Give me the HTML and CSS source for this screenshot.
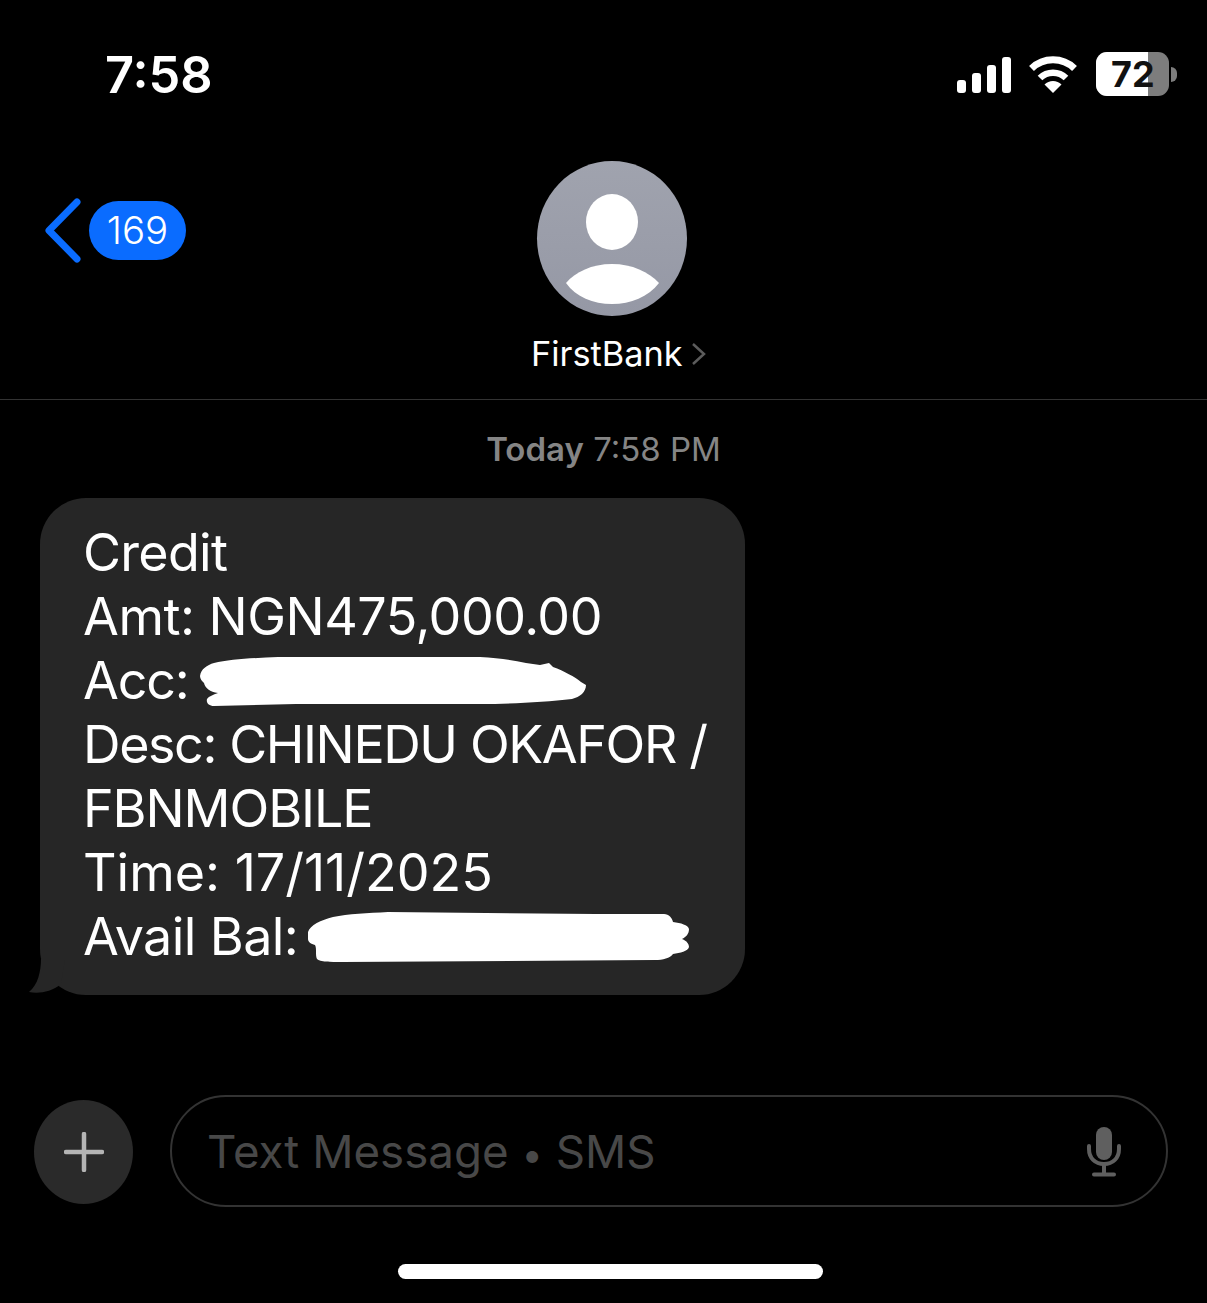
FILE: index.html
```html
<!DOCTYPE html>
<html lang="en">
<head>
    <meta charset="UTF-8">
    <meta name="viewport" content="width=device-width, initial-scale=1.0">
    <title>FirstBank</title>
    <link rel="stylesheet" href="styles.css">
</head>
<body>
    <div class="phone">
        <div class="status-bar">
            <span class="clock">7:58</span>
            <div class="status-icons">
                <div class="signal">
                    <span class="bar bar-1"></span>
                    <span class="bar bar-2"></span>
                    <span class="bar bar-3"></span>
                    <span class="bar bar-4"></span>
                </div>
                <svg class="wifi" width="50" height="39" viewBox="0 0 50 39">
                    <path d="M3.5 14.5A31 31 0 0 1 46.500 14.500" fill="none" stroke="#fff" stroke-width="7"/>
                    <path d="M12 24A18.500 18.500 0 0 1 38 24" fill="none" stroke="#fff" stroke-width="6.500"/>
                    <path d="M25 39L16.500 30.500A12 12 0 0 1 33.500 30.500Z" fill="#fff"/>
                </svg>
                <div class="battery">
                    <div class="battery-body">
                        <div class="battery-level"></div>
                        <span class="battery-text">72</span>
                    </div>
                    <span class="battery-cap"></span>
                </div>
            </div>
        </div>

        <div class="nav">
            <div class="back">
                <svg class="back-arrow" width="36" height="65" viewBox="0 0 36 65">
                    <path d="M32 4L4 32.500L32 61" fill="none" stroke="#0a6cff" stroke-width="7" stroke-linecap="round" stroke-linejoin="round"/>
                </svg>
                <span class="back-count">169</span>
            </div>
            <div class="contact">
                <div class="avatar">
                    <svg width="150" height="155" viewBox="0 0 150 155">
                        <ellipse cx="75" cy="61" rx="26" ry="28" fill="#fff"/>
                        <path d="M29 122C38 111 55 103 75 103C95 103 112 111 122 122C111 136 94 143 75 143C56 143 39 136 29 122Z" fill="#fff"/>
                    </svg>
                </div>
                <div class="contact-name">
                    FirstBank
                    <svg width="15" height="24" viewBox="0 0 15 24">
                        <path d="M2 2L13 12L2 22" fill="none" stroke="#5c5c5c" stroke-width="2.500"/>
                    </svg>
                </div>
            </div>
        </div>

        <div class="thread">
            <div class="timestamp"><b>Today</b> 7:58 PM</div>
            <div class="bubble">
                <svg class="bubble-tail" width="36" height="36" viewBox="0 0 36 36">
                    <path d="M12 0C12 12 9 26 0 33C10 35 22 33 32 25L36 0Z" fill="#262626"/>
                </svg>
                <div class="line line-credit">Credit</div>
                <div class="line line-amt">Amt: NGN475,000.00</div>
                <div class="line line-acc">Acc:
                    <svg class="redact redact-acc" width="386" height="52" viewBox="0 0 386 52">
                        <path d="M0 20C1 13 7 9 14 7C30 3 55 2 78 1L280 1C298 2 312 4 326 7L340 9L349 7L353 11C364 15 375 21 381 26L386 29C386 36 380 41 372 43C345 46 310 48 280 48L96 48L14 50C9 50 6 47 7 43C9 40 13 39 18 37C10 36 5 32 4 27C2 25 0 23 0 20Z" fill="#fff"/>
                    </svg>
                </div>
                <div class="line line-desc">Desc: CHINEDU OKAFOR /</div>
                <div class="line line-fbn">FBNMOBILE</div>
                <div class="line">Time: 17/11/2025</div>
                <div class="line line-bal">Avail Bal:
                    <svg class="redact redact-bal" width="381" height="50" viewBox="0 0 381 50">
                        <path d="M0 20C2 13 13 8 25 5C40 2 60 1 80 0L287 2L356 2C361 2 364 6 365 10C373 11 380 13 381 17C381 22 378 25 374 27C379 29 381 32 381 35C380 39 372 41 365 42C362 46 355 48 347 48L34 50C22 50 12 50 9 47C7 43 9 37 7 33C3 32 0 30 0 27Z" fill="#fff"/>
                    </svg>
                </div>
            </div>
        </div>

        <div class="composer">
            <div class="plus-btn">
                <svg width="40" height="40" viewBox="0 0 40 40">
                    <path d="M20 2V38M2 20H38" fill="none" stroke="#b4b4b4" stroke-width="4.500" stroke-linecap="round"/>
                </svg>
            </div>
            <div class="message-input">
                <span class="placeholder">Text Message <span class="placeholder-dot">•</span> SMS</span>
                <svg class="mic" width="34" height="50" viewBox="0 0 34 50">
                    <rect x="9" y="0" width="16" height="33" rx="8" fill="#5f5f5f"/>
                    <path d="M2 19V22C2 31 8 37 17 37C26 37 32 31 32 22V19" fill="none" stroke="#5f5f5f" stroke-width="4" stroke-linecap="round"/>
                    <path d="M17 37V47M7 47.500H27" fill="none" stroke="#5f5f5f" stroke-width="4" stroke-linecap="round"/>
                </svg>
            </div>
        </div>

        <div class="home-row">
            <div class="home-indicator"></div>
        </div>
    </div>
</body>
</html>
```
FILE: styles.css
```css
* {
    margin: 0;
    padding: 0;
    box-sizing: border-box;
}

body {
    background: #000;
    font-family: 'Inter', 'Roboto', sans-serif;
    color: #fff;
}

.phone {
    height: 1303px;
    display: flex;
    flex-direction: column;
    overflow: hidden;
}

/* status bar */
.status-bar {
    height: 148px;
    flex: none;
    display: flex;
    align-items: center;
    justify-content: space-between;
    padding: 0 30px 0 105px;
}

.clock {
    font-size: 50.500px;
    font-weight: 600;
    padding-top: 1px;
}

.status-icons {
    display: flex;
    align-items: flex-end;
}

.signal {
    display: flex;
    align-items: flex-end;
    gap: 6px;
    margin-right: 17px;
    margin-bottom: 3px;
}

.bar {
    width: 9px;
    background: #fff;
    border-radius: 3px;
}

.bar-1 { height: 13px; }
.bar-2 { height: 20px; }
.bar-3 { height: 28px; }
.bar-4 { height: 36px; }

.wifi {
    margin-right: 18px;
    margin-bottom: 3px;
}

.battery {
    display: flex;
    align-items: center;
    gap: 2px;
}

.battery-body {
    position: relative;
    width: 73px;
    height: 44px;
    background: #7d7d7d;
    border-radius: 11px;
    overflow: hidden;
}

.battery-level {
    width: 52px;
    height: 100%;
    background: #fff;
}

.battery-text {
    position: absolute;
    top: 0;
    left: 15px;
    line-height: 44px;
    font-size: 36px;
    font-weight: 700;
    color: #111;
}

.battery-cap {
    width: 6px;
    height: 15px;
    background: #7d7d7d;
    border-radius: 0 6px 6px 0;
}

/* header */
.nav {
    height: 252px;
    flex: none;
    display: flex;
    align-items: flex-start;
    padding: 13px 0 0 45px;
    border-bottom: 1px solid #333;
}

.back {
    display: flex;
    align-items: center;
    gap: 8px;
    margin-top: 37px;
    width: 486px;
}

.back-arrow {
    flex: none;
}

.back-count {
    width: 97px;
    height: 59px;
    background: #0a6cff;
    border-radius: 30px;
    font-size: 38.500px;
    font-weight: 300;
    line-height: 59px;
    text-align: center;
}

.contact {
    display: flex;
    flex-direction: column;
    align-items: flex-start;
}

.avatar {
    width: 150px;
    height: 155px;
    margin-left: 6px;
    border-radius: 50%;
    background: linear-gradient(#a0a3ae, #9598a5);
    display: flex;
}

.contact-name {
    display: flex;
    align-items: center;
    gap: 8px;
    margin-top: 17px;
    font-size: 34.300px;
    font-weight: 400;
    line-height: 42px;
}

/* messages */
.thread {
    flex: 1;
    padding-left: 40px;
}

.timestamp {
    width: 1127px;
    margin-top: 29px;
    height: 40px;
    line-height: 40px;
    text-align: center;
    font-size: 33px;
    color: #858585;
}

.timestamp b {
    font-weight: 600;
}

.bubble {
    position: relative;
    width: 705px;
    height: 497px;
    margin-top: 29px;
    padding: 23px 0 0 43px;
    background: #262626;
    border-radius: 46px;
}

.bubble-tail {
    position: absolute;
    left: -11px;
    bottom: 0;
}

.line {
    display: flex;
    align-items: center;
    gap: 12px;
    height: 64px;
    font-size: 52px;
    line-height: 64px;
    white-space: nowrap;
}

.line-credit { letter-spacing: -0.7px; }
.line-amt { letter-spacing: -0.5px; }
.line-acc { letter-spacing: -1.2px; }
.line-desc { letter-spacing: -1.4px; }
.line-fbn { letter-spacing: -1.1px; }
.line-bal { letter-spacing: -0.6px; }

.redact {
    flex: none;
}

.redact-acc {
    margin-top: 2px;
}

.redact-bal {
    margin-left: -2px;
}

/* input row */
.composer {
    flex: none;
    display: flex;
    align-items: center;
    gap: 37px;
    padding: 0 39px 0 34px;
}

.plus-btn {
    flex: none;
    width: 99px;
    height: 104px;
    margin-top: 2px;
    border-radius: 50%;
    background: #2a2a2a;
    display: flex;
    align-items: center;
    justify-content: center;
}

.message-input {
    flex: 1;
    height: 112px;
    display: flex;
    align-items: center;
    justify-content: space-between;
    padding: 0 45px 0 35px;
    border: 2.500px solid #333;
    border-radius: 56px;
}

.placeholder {
    font-size: 45.700px;
    color: #484848;
}

.placeholder-dot {
    font-size: 38px;
}

.mic {
    margin-top: 2px;
}

.home-row {
    flex: none;
    height: 96px;
    padding-top: 57px;
    display: flex;
    justify-content: center;
    padding-left: 13px;
}

.home-indicator {
    width: 425px;
    height: 15px;
    background: #fff;
    border-radius: 8px;
}
```
